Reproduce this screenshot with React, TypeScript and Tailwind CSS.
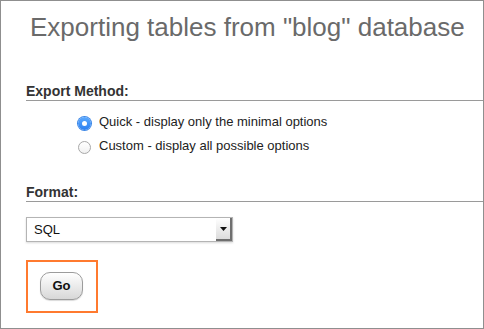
import { useState } from "react";

type RadioOption = {
    value: string,
    label: string,
}

const methods: RadioOption[] = [
    { value: "quick", label: "Quick - display only the minimal options" },
    { value: "custom", label: "Custom - display all possible options" },
];

const Radio = ({ checked }: { checked: boolean }) => (
    checked ? (
        <span className="flex h-[13px] w-[13px] shrink-0 items-center justify-center rounded-full bg-gradient-to-b from-[#5aa9ff] to-[#2a7ff0] shadow-[0_0_0_1px_#3b86e6]">
            <span className="h-[5px] w-[5px] rounded-full bg-white" />
        </span>
    ) : (
        <span className="block h-[13px] w-[13px] shrink-0 rounded-full border border-[#a8a8a8] bg-gradient-to-b from-white to-[#f1f1f1]" />
    )
);

const SectionTitle = ({ children }: { children: string }) => (
    <h2 className="border-b border-[#9a9a9a] text-[14px] font-bold leading-[17px] text-[#333]">
        {children}
    </h2>
);

export default function App() {
    const [method, setMethod] = useState<string>("quick");

    return (
        <div className="h-[329px] w-[484px] overflow-hidden border border-[#8f8f8f] bg-white font-['Liberation_Sans',Arial,sans-serif]">
            <h1 className="mt-[11px] pl-[29px] text-[26px] leading-[30px] text-[#6a6a6a]">
                Exporting tables from "blog" database
            </h1>

            <div className="mt-[41px] pl-[25px]">
                <SectionTitle>Export Method:</SectionTitle>
                <ul className="mt-[9px] pl-[52px]">
                    {methods.map((option) => (
                        <li
                            key={option.value}
                            className="flex h-[24px] cursor-default items-center gap-[8px] text-[13px] text-[#222]"
                            onClick={() => setMethod(option.value)}
                        >
                            <span className="mt-[3px] block">
                                <Radio checked={method === option.value} />
                            </span>
                            <span>{option.label}</span>
                        </li>
                    ))}
                </ul>

                <div className="mt-[26px]">
                    <SectionTitle>Format:</SectionTitle>
                </div>

                <div className="mt-[15px] flex h-[25px] w-[207px] items-stretch border border-[#b4b4b4] bg-white shadow-[0_1px_2px_rgba(0,0,0,0.15)]">
                    <span className="flex flex-1 items-center pl-[7px] text-[13px] text-[#111]">SQL</span>
                    <span className="flex w-[16px] items-center justify-center border-b-2 border-r-2 border-[#6f6f6f] bg-gradient-to-b from-white to-[#dcdcdc]">
                        <svg width="7" height="4" viewBox="0 0 7 4">
                            <path d="M0 0h7L3.5 4z" fill="#111" />
                        </svg>
                    </span>
                </div>

                <div className="mt-[18px] h-[53px] w-[72px] border-2 border-[#ff7a2f] pl-[12px] pt-[10px]">
                    <button className="h-[28px] w-[43px] rounded-[10px] border border-[#9c9c9c] bg-gradient-to-b from-white to-[#d8d8d8] text-[13px] font-bold text-[#111] shadow-[0_1px_1px_rgba(0,0,0,0.15)]">
                        Go
                    </button>
                </div>
            </div>
        </div>
    );
}
